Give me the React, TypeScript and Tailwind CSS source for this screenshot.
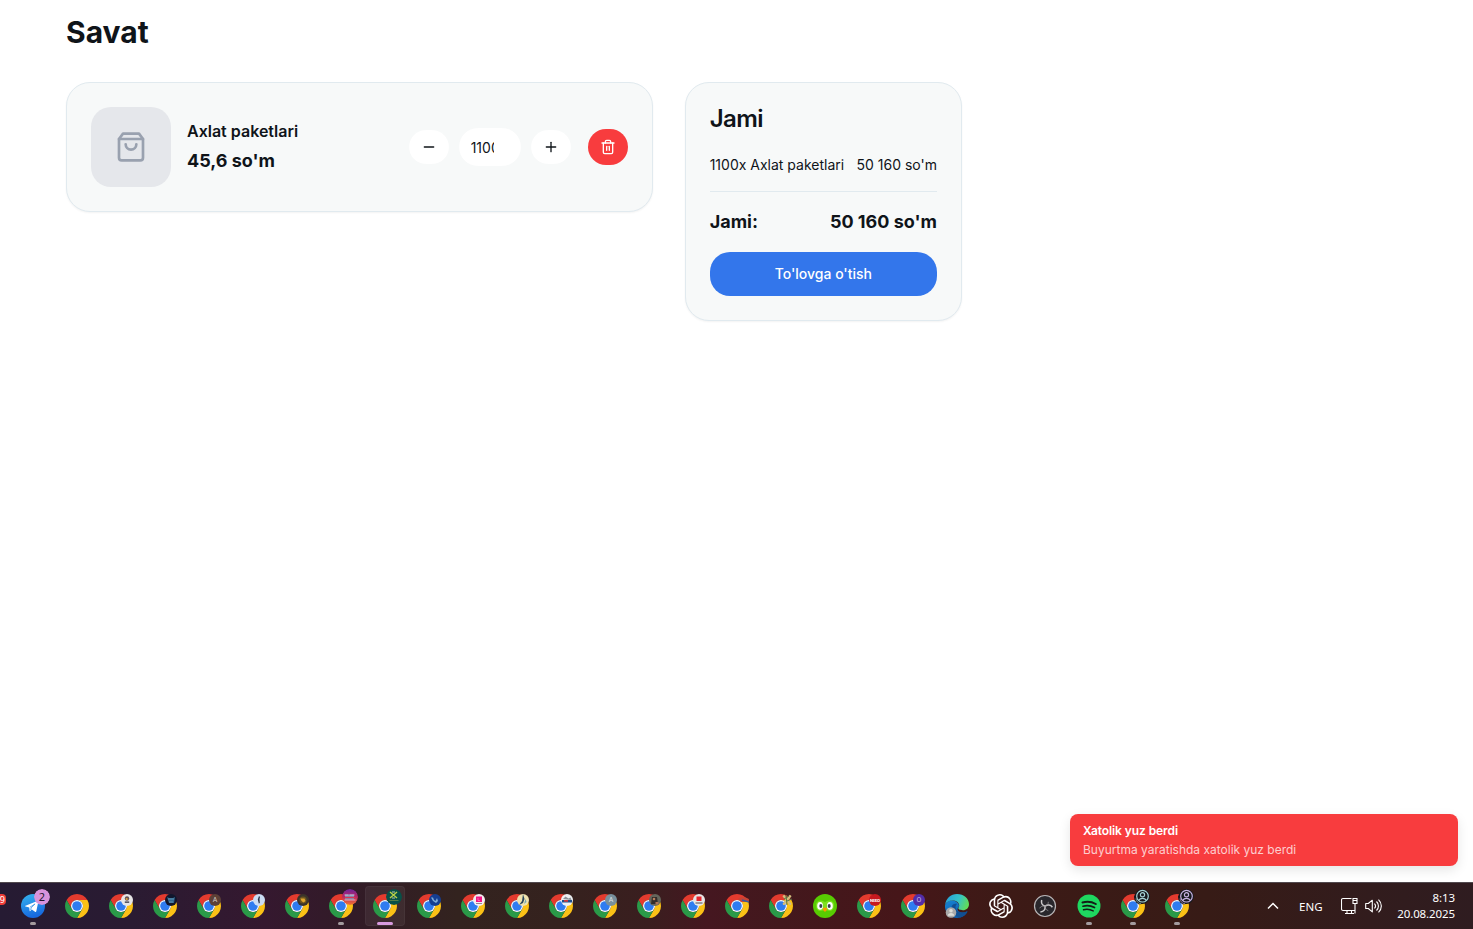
import type { ReactNode } from 'react';
import { Minus, Plus, Trash2 } from 'lucide-react';
import { SiOpenai } from 'react-icons/si';

function BagIcon() {
  return (
    <svg className="size-8 text-gray-400" viewBox="0 0 24 24" fill="none" stroke="currentColor" strokeWidth="2" strokeLinecap="round" strokeLinejoin="round">
      <path d="M6 2 3 6v14a2 2 0 0 0 2 2h14a2 2 0 0 0 2-2V6l-3-4Z" />
      <path d="M3 6h18" />
      <path d="M16 10a4 4 0 0 1-8 0" />
    </svg>
  );
}

function Chrome() {
  return (
    <svg className="size-6" viewBox="0 0 48 48">
      <path fill="#e33b2e" d="M3.22 12A24 24 0 0 1 44.78 12H24A12 12 0 0 0 13.61 30Z" />
      <path fill="#fbc116" d="M44.78 12A24 24 0 0 1 24 48L34.39 30A12 12 0 0 0 24 12Z" />
      <path fill="#2a9a48" d="M24 48A24 24 0 0 1 3.22 12L13.61 30A12 12 0 0 0 34.39 30Z" />
      <circle cx="24" cy="24" r="12" fill="#fff" />
      <circle cx="24" cy="24" r="9.6" fill="#2f7cf0" />
    </svg>
  );
}

function Badge({ children }: { children: ReactNode }) {
  return (
    <span className="absolute top-0 right-0 size-3 overflow-hidden rounded-full">
      <svg className="size-3" viewBox="0 0 12 12">
        {children}
      </svg>
    </span>
  );
}

function LargeBadge({ children }: { children: ReactNode }) {
  return (
    <span className="absolute -top-[5px] -right-[5px] size-4 overflow-hidden rounded-full">
      <svg className="size-4" viewBox="0 0 16 16">
        {children}
      </svg>
    </span>
  );
}

function Letter({ bg, fg, text }: { bg: string; fg: string; text: string }) {
  return (
    <Badge>
      <rect width="12" height="12" fill={bg} />
      <text x="6" y="8.4" fontSize="7" fontFamily="Roboto, sans-serif" textAnchor="middle" fill={fg}>{text}</text>
    </Badge>
  );
}

function Person({ color }: { color: string }) {
  return (
    <LargeBadge>
      <circle cx="5.5" cy="9.5" r="6" fill="#17171c" />
      <circle cx="8.5" cy="7.5" r="7.5" fill="#17191e" />
      <g fill="none" stroke={color} strokeWidth="1.2">
        <circle cx="8.5" cy="7.2" r="5.8" />
        <circle cx="8.5" cy="5.8" r="2.1" />
        <path d="M4.7 11.4c1.7-2.7 5.9-2.7 7.6 0" />
      </g>
      <path d="M2 9.5a5.3 5.3 0 0 0 5 5.2" fill="none" stroke={color} strokeWidth=".6" />
    </LargeBadge>
  );
}

function Telegram() {
  return (
    <svg className="size-6" viewBox="0 0 24 24">
      <defs>
        <linearGradient id="tg" x1="0" y1="0" x2=".3" y2="1">
          <stop stopColor="#35b5ee" />
          <stop offset="1" stopColor="#1769df" />
        </linearGradient>
      </defs>
      <circle cx="12" cy="12" r="12" fill="url(#tg)" />
      <path fill="#fff" d="m4.500 11.700 11.800-4.800c.7-.3 1.200.1 1 .9l-2 9.500c-.2.8-.7.9-1.300.5l-3.200-2.400-1.600 1.600c-.3.3-.6.2-.6-.3l-.3-3.200-3.700-1.100c-.8-.2-.8-.5-.1-.7Z" />
      <path stroke="#2489e2" strokeWidth=".7" d="m9 13.200 5-3.300-3.900 4-.4 2.100" fill="none" />
    </svg>
  );
}

function Duolingo() {
  return (
    <svg className="size-6" viewBox="0 0 24 24">
      <circle cx="12" cy="12" r="12" fill="#58cc02" />
      <path d="M3 11c0-3 2-4.500 4.500-4.500S11 8 12 8s2-1.500 4.500-1.500S21 8 21 11c0 4-2 6-4.500 6-2 0-3-1-4.500-1s-2.500 1-4.500 1C5 17 3 15 3 11Z" fill="#7ee01f" />
      <ellipse cx="7.100" cy="11.900" rx="2.900" ry="3.800" fill="#fff" />
      <ellipse cx="16.900" cy="11.900" rx="2.900" ry="3.800" fill="#fff" />
      <ellipse cx="7.800" cy="12" rx="1.500" ry="2.100" fill="#374047" />
      <ellipse cx="16.200" cy="12" rx="1.500" ry="2.100" fill="#374047" />
      <path fill="#ff9b00" d="M9.800 14.600q2.200-2 4.400 0-.7 3.200-2.200 3.200t-2.200-3.200Z" />
    </svg>
  );
}

function Edge() {
  return (
    <svg className="size-6" viewBox="0 0 24 24">
      <defs>
        <linearGradient id="e1" x1="0" y1=".2" x2="1" y2=".5">
          <stop stopColor="#279fd8" />
          <stop offset=".55" stopColor="#34c2c8" />
          <stop offset="1" stopColor="#62dc58" />
        </linearGradient>
        <linearGradient id="e2" x1="0" y1="0" x2=".5" y2="1">
          <stop stopColor="#1784d4" />
          <stop offset="1" stopColor="#0b5cab" />
        </linearGradient>
      </defs>
      <path fill="url(#e2)" d="M.3 10.500C2 7 5 6 8 6.500c3.500.4 6 2.800 6 5.500 0 1-1.500 1.800-1.500 3.200 0 2 2.500 3.300 5.300 3.300 2 0 3.200-.6 4.100-1 .4-.1.6.2.4.6C20.200 21.800 16.500 24 12 24 5 24-.5 18.500 0 11.500Z" />
      <path fill="#104f93" d="M8 10.500C6.300 12 6 14 6.500 16.500c1 4.300 5 6.700 8.800 6.900 3-.8 5.700-2.900 7-5.500.2-.3-.2-.5-.5-.3-1 .5-2.300.9-4 .9-3.800 0-7.300-2.300-7.300-5.500 0-2 1.500-3 1.500-3S9.500 9.300 8 10.500Z" />
      <path fill="url(#e1)" d="M.1 11C.7 4.500 5.800 0 12 0c7 0 12 4.800 12 10.200 0 3.800-2.800 6-6 6-3.700 0-4.700-1.300-4.700-1.900 0-.5.9-1 .9-2.700C14.200 8.300 11 6.500 7.500 6.500 4 6.500 1 8 .1 11Z" />
      <circle cx="6" cy="18.500" r="5.300" fill="#a9a9a9" />
      <circle cx="6" cy="16.700" r="1.800" fill="#deded9" />
      <path fill="#deded9" d="M2.800 21.700c0-3.700 6.400-3.700 6.400 0Z" />
    </svg>
  );
}

function Obs() {
  return (
    <svg className="size-6" viewBox="0 0 24 24">
      <circle cx="12" cy="12" r="10.500" fill="#29272c" stroke="#b8b5b7" strokeWidth="1.200" />
      <g fill="none" stroke="#cbc8ca" strokeWidth="1.500">
        <path d="M12 12.300C9.500 11.500 8 9 8.700 6" />
        <path d="M12 12.300c2.500-2 5.700-1.500 7.400.9" />
        <path d="M12 12.300c.7 3-1.200 5.300-4.600 5.700" />
      </g>
      <g fill="none" stroke="#99969a" strokeWidth=".7">
        <path d="M12 12.300c2.200-.5 3.400-2.200 3.300-4.500" />
        <path d="M12 12.300c-2.200-.8-4.400 0-5.400 2" />
        <path d="M12 12.300c.2 2.300 1.200 3.700 3.300 4.400" />
      </g>
    </svg>
  );
}

function Spotify() {
  return (
    <svg className="size-6" viewBox="0 0 24 24">
      <circle cx="12" cy="12" r="11.500" fill="#1ed760" />
      <g fill="none" stroke="#141b16" strokeLinecap="round">
        <path d="M5.500 8.500c4.500-1.300 9.300-.8 13.300 1.500" strokeWidth="2" />
        <path d="M6 12.200c4-1.100 8-.6 11.500 1.400" strokeWidth="1.700" />
        <path d="M6.500 15.700c3.400-.9 6.800-.4 9.700 1.200" strokeWidth="1.400" />
      </g>
    </svg>
  );
}

type TaskApp = { icon?: ReactNode; badge?: ReactNode; open?: boolean; active?: boolean };

const apps: TaskApp[] = [
  {
    icon: <Telegram />,
    open: true,
    badge: (
      <LargeBadge>
        <circle cx="8" cy="8" r="8" fill="#d893dc" />
        <text x="8" y="12" fontSize="11" fontFamily="Noto Sans, sans-serif" textAnchor="middle" fill="#21142a">2</text>
      </LargeBadge>
    ),
  },
  {},
  { badge: <Badge><rect width="12" height="12" fill="#e6e5e6" /><circle cx="6" cy="4.500" r="2.200" fill="#645052" /><circle cx="5.700" cy="5" r="1.100" fill="#dfa33f" /><path fill="#2a2c3d" d="M3.800 7.500h4.400v1.300H3.800z" /></Badge> },
  { badge: <Badge><rect width="12" height="12" fill="#11172d" /><path fill="#2e6690" d="m2 3 2 1h4l2-1-1 6H4Z" /><path stroke="#76a7bb" strokeWidth=".7" d="M3 5h6M4 8h4" /></Badge> },
  { badge: <Letter bg="#5d4037" fg="#d9cbc6" text="A" /> },
  { badge: <Badge><rect width="12" height="12" fill="#cbdcf4" /><path fill="#27334a" d="m6 2 1 1-.5 2 .3 4-1 .5-1-4Z" /></Badge> },
  { badge: <Badge><rect width="12" height="12" fill="#3b342a" /><circle cx="6" cy="6" r="3.600" fill="#6c5420" /><path fill="#e0a52c" d="M3.500 4.500h4l1 2.500-2 1.500-2-1.500Z" /></Badge> },
  {
    open: true,
    badge: (
      <LargeBadge>
        <defs><linearGradient id="sunset" x2="0" y2="1"><stop stopColor="#6d249d" /><stop offset=".5" stopColor="#bd2764" /><stop offset="1" stopColor="#f17331" /></linearGradient></defs>
        <circle cx="8" cy="8" r="8" fill="url(#sunset)" />
        <path fill="#7598be" d="M3 5.500h9v5H3z" /><path stroke="#e4cadd" strokeWidth=".8" d="M2.500 6h4m1 0h5M2.500 11h11" /><path stroke="#db3354" strokeWidth="1.700" d="M3 8.500h10" />
      </LargeBadge>
    ),
  },
  {
    active: true,
    badge: (
      <LargeBadge>
        <circle cx="8" cy="8" r="8" fill="#075047" />
        <path d="m4 3 7 6M11 3 4 9" stroke="#b8d247" strokeWidth="1.400" /><path stroke="#e3e6c8" d="M6 3h3M6 9h3" strokeWidth=".8" /><path stroke="#658a4a" strokeWidth=".8" d="M3.500 11.500h9" />
      </LargeBadge>
    ),
  },
  { badge: <Badge><rect width="12" height="12" fill="#153e91" /><path fill="#7eabd7" d="M2 3.500h2l1 2.500 1.500 1 1.500-3 1 3-2 2-3-2Z" /></Badge> },
  { badge: <Badge><rect width="12" height="12" fill="#f5edf1" /><path fill="#f21684" d="M3 2.500h6v5.500H3z" /><path stroke="#ff8dc7" strokeWidth=".7" d="M5 4v2.500h2" fill="none" /><path stroke="#806b76" strokeWidth=".8" d="M3 9.500h6" /></Badge> },
  { badge: <Badge><rect width="12" height="12" fill="#eee2af" /><path fill="#28465d" d="m6 0 1.500 5-1.500 4-4 2 3-4Z" /><path fill="#73a7b5" d="m8.500 5 1 3-2.500 2Z" /></Badge> },
  { badge: <Badge><rect width="12" height="12" fill="#edf0f2" /><path fill="#8b9198" d="m2 5 2.500-2.500 3 2 2-1 1 2.500Z" /><path fill="#204f8b" d="M1 6h10v2.500H1z" /><path fill="#cc3b40" d="M3 6h4v1.800H3z" /></Badge> },
  { badge: <Letter bg="#78909c" fg="#e0e6e8" text="A" /> },
  { badge: <Badge><rect width="12" height="12" fill="#65665b" /><path fill="#332d2b" d="M3 3h5l1 7H2z" /><circle cx="5" cy="5" r="1.300" fill="#b9805d" /><path fill="#ad7456" d="M6.500 8h3v2.500h-3z" /></Badge> },
  { badge: <Badge><rect width="12" height="12" fill="#e8e6e7" /><path fill="#e6252f" d="M3.500 2.500h5V7h-5z" /><path stroke="#514b50" strokeWidth="1.100" d="M2.500 9h7" /></Badge> },
  { badge: <Badge><path fill="#c74435" d="M1 5C4 2 8 3 12 5v3H4Z" /><path stroke="#345d9c" strokeWidth="1.500" d="m5 6 7 2" /></Badge> },
  { badge: <Badge><path stroke="#d2bd7d" strokeWidth="2.500" d="m2 1 8 10M10 1 2 11" /><path stroke="#557746" d="m3 5 5-3m-2 5 5-2M5 1l1 10" /></Badge> },
  { icon: <Duolingo /> },
  { badge: <Badge><rect width="12" height="12" fill="#c7191f" /><text x="6" y="7.700" fontSize="4.400" fontWeight="800" fontFamily="Roboto, sans-serif" textAnchor="middle" fill="#fff">NISO</text></Badge> },
  { badge: <Letter bg="#512da8" fg="#cbbce8" text="O" /> },
  { icon: <Edge /> },
  { icon: <SiOpenai className="size-6 text-white" /> },
  { icon: <Obs /> },
  { icon: <Spotify />, open: true },
  { badge: <Person color="#a5d2d4" />, open: true },
  { badge: <Person color="#c5b0df" />, open: true },
];

function TaskbarApp({ icon, badge, open, active }: TaskApp) {
  return (
    <div className={active ? 'relative mx-0.5 flex h-10 w-10 justify-center rounded border border-white/4 bg-white/6 pt-[7px]' : 'relative mx-0.5 flex h-10 w-10 justify-center pt-2'}>
      <div className="relative size-6">
        {icon ?? <Chrome />}
        {badge}
      </div>
      {open && <span className="absolute bottom-px h-[3px] w-1.5 rounded-full bg-[#a49b9f]" />}
      {active && <span className="absolute bottom-0 h-[3px] w-4 rounded-full bg-[#d99be0]" />}
    </div>
  );
}

function Taskbar() {
  return (
    <footer className="flex h-[47px] shrink-0 overflow-hidden border-t border-[#51494e] bg-[linear-gradient(90deg,#261b33_0%,#2a1b32_9%,#35182f_18%,#321b27_24%,#33231f_31%,#35221e_38%,#3a1e1f_44%,#451720_48%,#43181d_53%,#461619_61%,#3d1a16_68%,#371b16_82%,#321c1d_93%,#2f1c20_100%)] pt-[3px] font-['Noto_Sans',sans-serif] text-white">
      <div className="flex w-[11px] shrink-0">
        <span className="mt-2 flex h-[11px] w-1.5 items-center justify-end rounded-r-sm bg-[#ee3b36] pr-px text-[9px] leading-none">9</span>
      </div>
      <div className="flex">
        {apps.map((app, i) => (
          <TaskbarApp key={i} {...app} />
        ))}
      </div>
      <div className="ml-auto flex h-10 items-center pr-[18px]">
        <svg className="mr-5 h-2 w-3" viewBox="0 0 12 8" fill="none" stroke="currentColor" strokeWidth="1.500"><path d="m1 6.500 5-5 5 5" /></svg>
        <span className="mr-[17px] w-[25px] pt-px text-[11.500px]">ENG</span>
        <svg className="mr-[7px] h-[18px] w-[17px]" viewBox="0 0 17 18" fill="none" stroke="currentColor" strokeWidth="1.100">
          <path d="M10.500 1.500H2A1.500 1.500 0 0 0 .5 3v9A1.500 1.500 0 0 0 2 13.500h11.500M4 16.500h9M6 13.500v3M10.500 13.500v3M12 1.500h4v5h-4zM14 6.500v10M12 3.500h4" />
        </svg>
        <svg className="mr-[15px] h-4 w-[17px]" viewBox="0 0 17 16" fill="none" stroke="currentColor" strokeWidth="1.100" strokeLinejoin="round">
          <path d="M.7 5.500v5h2.600l4 3.300V2.200l-4 3.300ZM9.500 5.500c1.300 1.500 1.300 3.500 0 5M11.500 3.500c2.600 2.600 2.600 6.400 0 9M13.500 1.700c3.800 3.700 3.800 8.900 0 12.600" />
        </svg>
        <div className="flex w-[58px] flex-col items-end text-[11.500px] leading-4 tracking-[-0.1px] whitespace-nowrap">
          <span>8:13</span>
          <span>20.08.2025</span>
        </div>
      </div>
    </footer>
  );
}

function CartItem() {
  return (
    <section className="flex h-[130px] items-center rounded-3xl border border-[#e1eaef] bg-[#f7f9f9] p-6 shadow-xs">
      <div className="flex size-20 items-center justify-center rounded-[20px] bg-gray-200">
        <BagIcon />
      </div>
      <div className="ml-4 flex-1">
        <h3 className="mb-1 text-base font-semibold">Axlat paketlari</h3>
        <p className="text-lg leading-7 font-bold">45,6 so'm</p>
      </div>
      <div className="flex items-center gap-2">
        <button className="flex h-9 w-[42px] items-center justify-center rounded-[18px] border border-[#f7f9f9] bg-white"><Minus className="size-4" /></button>
        <div className="flex h-10 w-16 items-center rounded-[20px] border border-[#f7f9f9] bg-white pt-0.5 pl-3 text-sm">
          <span className="w-[23px] overflow-hidden">1100</span>
        </div>
        <button className="flex h-9 w-[42px] items-center justify-center rounded-[18px] border border-[#f7f9f9] bg-white"><Plus className="size-4" /></button>
      </div>
      <button className="ml-4 flex h-9 w-10 items-center justify-center rounded-[18px] bg-[#f83c3e] text-white"><Trash2 className="size-4" /></button>
    </section>
  );
}

function Summary() {
  return (
    <aside className="rounded-3xl border border-[#e1eaef] bg-[#f7f9f9] p-6 shadow-xs">
      <h2 className="mb-6 text-2xl leading-none font-semibold tracking-tight">Jami</h2>
      <div className="flex justify-between text-sm whitespace-nowrap">
        <span>1100x Axlat paketlari</span>
        <span>50 160 so'm</span>
      </div>
      <div className="mt-4 flex justify-between border-t border-[#e1eaef] pt-4 text-lg leading-7 font-bold">
        <span>Jami:</span>
        <span>50 160 so'm</span>
      </div>
      <button className="mt-4 flex h-11 w-full items-center justify-center rounded-[20px] bg-[#3376eb] text-sm font-medium text-white">To'lovga o'tish</button>
    </aside>
  );
}

export default function App() {
  return (
    <div className="relative flex h-screen flex-col overflow-hidden bg-white font-['Inter',sans-serif] text-[#0f1419]">
      <main className="flex-1 pt-3.5 pl-[66px]">
        <h1 className="mb-8 text-3xl leading-9 font-bold">Savat</h1>
        <div className="grid w-[896px] grid-cols-3 gap-8">
          <div className="col-span-2"><CartItem /></div>
          <Summary />
        </div>
      </main>
      <div className="absolute right-[15px] bottom-[63px] h-[52px] w-[388px] rounded-lg bg-[#f83c3e] px-[13px] pt-[7px] text-[12px] leading-[19px] text-white shadow-[0_4px_12px_rgba(0,0,0,0.1)]">
        <p className="font-semibold tracking-[-0.08px]">Xatolik yuz berdi</p>
        <p className="text-white/75">Buyurtma yaratishda xatolik yuz berdi</p>
      </div>
      <Taskbar />
    </div>
  );
}
